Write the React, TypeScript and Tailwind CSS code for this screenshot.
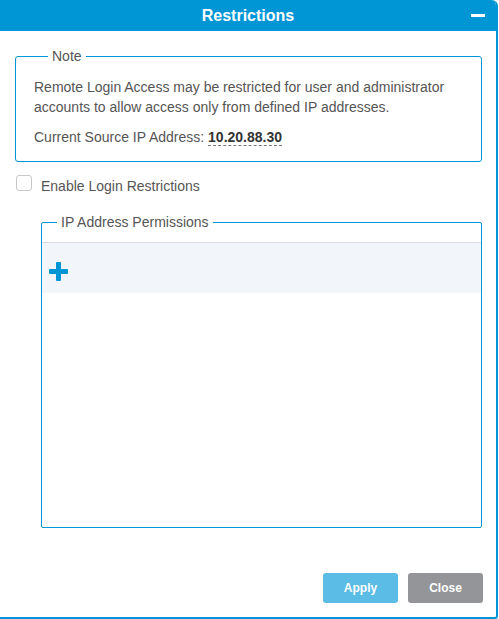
import { useState } from "react";

// Restrictions dialog
export default function App() {
  const [enabled, setEnabled] = useState(false);

  return (
    <div
      className="w-[499px] h-[619px] bg-white flex flex-col text-[14px] text-[#555]"
      style={{ fontFamily: "'Liberation Sans', Arial, sans-serif" }}
    >
      <div className="flex flex-col h-[619px] w-[498px] border-r-2 border-b-2 border-[#0096d6] rounded-tr-[6px] rounded-br-[3px] overflow-hidden">
        {/* Header */}
        <div className="relative h-[31px] shrink-0 bg-[#0096d6] flex items-center justify-center">
          <span className="text-white font-bold text-[16px]">Restrictions</span>
          <span className="absolute right-[11px] top-[14px] w-[14px] h-[3px] bg-white" />
        </div>

        {/* Body */}
        <div className="flex-1 flex flex-col pl-[15px] pr-[14px] pt-[17px]">
          <fieldset className="border border-[#0096d6] rounded-[3px] px-[18px] pb-[14px] pt-[13px]">
            <legend className="ml-[14px] px-[4px] leading-[16px] text-[#555]">Note</legend>
            <p className="leading-[20px]">
              Remote Login Access may be restricted for user and administrator accounts to allow access only from defined IP addresses.
            </p>
            <p className="mt-[10px] leading-[20px]">
              Current Source IP Address:{" "}
              <span className="font-bold text-[#333] border-b border-dashed border-[#777]">10.20.88.30</span>
            </p>
          </fieldset>

          <label className="mt-[13px] flex items-start gap-[9px] cursor-pointer">
            <input
              type="checkbox"
              checked={enabled}
              onChange={(e) => setEnabled(e.target.checked)}
              className="appearance-none w-[16px] h-[16px] ml-[1px] border border-[#c8c8c8] rounded-[3px] bg-white checked:bg-[#0096d6]"
            />
            <span className="leading-[20px] mt-[1px]">Enable Login Restrictions</span>
          </label>

          <fieldset className="mt-[18px] ml-[26px] h-[314px] border border-[#0096d6] rounded-[2px] pt-[12px]">
            <legend className="ml-[15px] px-[4px] leading-[16px] text-[#555]">IP Address Permissions</legend>
            <div className="border-t border-[#d9dde2] h-[51px] bg-[#f2f5fa] flex items-start pt-[19px] pl-[7px]">
              <svg width="19" height="19" viewBox="0 0 19 19">
                <rect x="7" y="0" width="5" height="19" rx="1" fill="#0096d6" />
                <rect x="0" y="7" width="19" height="5" rx="1" fill="#0096d6" />
              </svg>
            </div>
          </fieldset>

          <div className="mt-auto mb-[14px] -mr-[1px] flex justify-end gap-[10px]">
            <button className="w-[75px] h-[30px] rounded-[3px] bg-[#5bbce6] text-white font-bold text-[12px]">Apply</button>
            <button className="w-[75px] h-[30px] rounded-[3px] bg-[#939598] text-white font-bold text-[12px]">Close</button>
          </div>
        </div>
      </div>
    </div>
  );
}
